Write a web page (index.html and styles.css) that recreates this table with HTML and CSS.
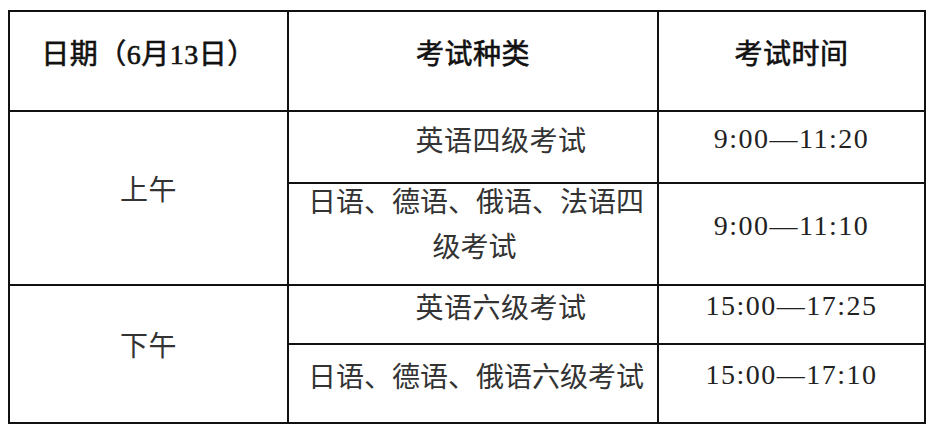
FILE: index.html
```html
<!DOCTYPE html>
<html lang="zh-CN">
<head>
<meta charset="utf-8">
<title>考试安排</title>
<link rel="stylesheet" href="styles.css">
</head>
<body>
<div class="schedule">
  <div class="cell head">日期（6月13日）</div>
  <div class="cell head">考试种类</div>
  <div class="cell head">考试时间</div>

  <div class="cell period">上午</div>
  <div class="cell exam indent">英语四级考试</div>
  <div class="cell time">9:00—11:20</div>
  <div class="cell exam wide two-line"><span class="line full">日语、德语、俄语、法语四</span><span class="line">级考试</span></div>
  <div class="cell time">9:00—11:10</div>

  <div class="cell period">下午</div>
  <div class="cell exam indent">英语六级考试</div>
  <div class="cell time">15:00—17:25</div>
  <div class="cell exam wide"><span class="line full">日语、德语、俄语六级考试</span></div>
  <div class="cell time">15:00—17:10</div>
</div>
</body>
</html>
```

FILE: styles.css
```css
html, body {
  margin: 0;
  padding: 0;
  background: #ffffff;
}

body {
  font-family: "Liberation Serif", "Noto Sans CJK SC", serif;
  color: #333333;
}

.schedule {
  margin: 10px 0 0 8px;
  display: grid;
  grid-template-columns: 279px 370px 267px;
  grid-template-rows: 100px 72px 102px 59px 79px;
  width: max-content;
  border-top: 2px solid #111111;
  border-left: 2px solid #111111;
}

.cell {
  box-sizing: border-box;
  border-right: 2px solid #111111;
  border-bottom: 2px solid #111111;
  display: flex;
  flex-direction: column;
  justify-content: center;
  text-align: center;
  padding: 0 8px 17px;
  font-size: 28px;
  line-height: 40px;
  letter-spacing: 0.5px;
  white-space: nowrap;
}

.head {
  color: #111111;
  font-weight: 400;
  -webkit-text-stroke: 0.6px #111111;
  padding-bottom: 12px;
}

.period,
.exam {
  font-family: "Noto Sans CJK SC", sans-serif;
}

.period {
  grid-row: span 2;
  padding-bottom: 20px;
}

.indent {
  text-indent: 2em;
}

.wide {
  padding: 0 16px 17px 19px;
  line-height: 45px;
  letter-spacing: 0;
}

.two-line {
  padding-bottom: 23px;
}

.line {
  display: block;
}

.full {
  text-align: justify;
  text-align-last: justify;
}

.time {
  font-size: 28px;
  letter-spacing: 1.5px;
  color: #222222;
}
```
